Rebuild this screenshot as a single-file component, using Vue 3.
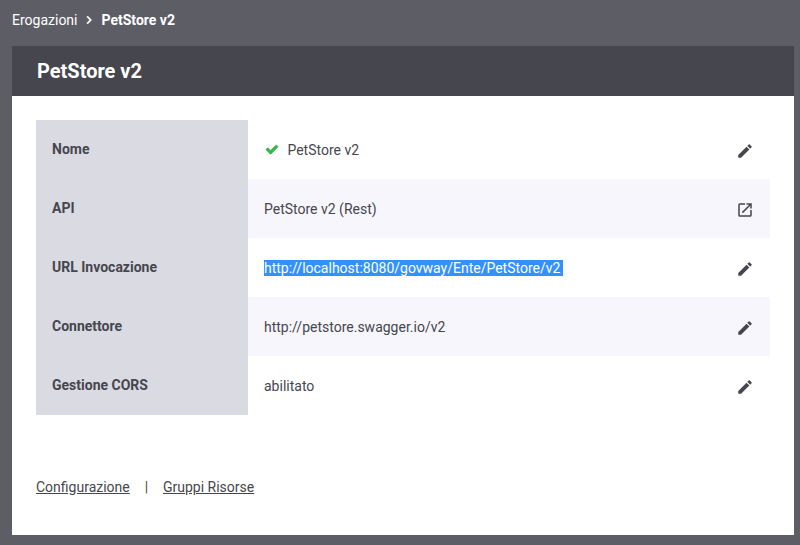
<script setup>
const rows = [
  { label: 'Nome', value: 'PetStore v2', icon: 'edit', ok: true },
  { label: 'API', value: 'PetStore v2 (Rest)', icon: 'open' },
  { label: 'URL Invocazione', value: 'http://localhost:8080/govway/Ente/PetStore/v2', icon: 'edit', selected: true },
  { label: 'Connettore', value: 'http://petstore.swagger.io/v2', icon: 'edit' },
  { label: 'Gestione CORS', value: 'abilitato', icon: 'edit' },
]
const icons = {
  edit: 'M3 17.25V21h3.75L17.81 9.94l-3.75-3.75L3 17.25zM20.71 7.04a1 1 0 0 0 0-1.41l-2.34-2.34a1 1 0 0 0-1.41 0l-1.83 1.83 3.75 3.75 1.83-1.83z',
  open: 'M19 19H5V5h7V3H5a2 2 0 0 0-2 2v14a2 2 0 0 0 2 2h14c1.1 0 2-.9 2-2v-7h-2v7zM14 3v2h3.59l-9.83 9.83 1.41 1.41L19 6.41V10h2V3h-7z',
}
</script>

<template>
  <div class="page">
    <nav class="crumbs">
      <a class="crumb">Erogazioni</a>
      <svg class="chevron" viewBox="0 0 24 24"><path d="M8.59 16.59 13.17 12 8.59 7.41 10 6l6 6-6 6z" /></svg>
      <span class="crumb current">PetStore v2</span>
    </nav>
    <main class="panel">
      <h1 class="title">PetStore v2</h1>
      <div class="body">
        <div class="table">
          <div v-for="row in rows" :key="row.label" class="row">
            <div class="label">{{ row.label }}</div>
            <div class="value">
              <svg v-if="row.ok" class="check" viewBox="121 334 1550 1188"><path d="M1671 566q0 40-28 68l-724 724-136 136q-28 28-68 28t-68-28l-136-136-362-362q-28-28-28-68t28-68l136-136q28-28 68-28t68 28l294 295 656-657q28-28 68-28t68 28l136 136q28 28 28 68z" /></svg>
              <span class="text" :class="{ selected: row.selected }">{{ row.value }}</span>
              <svg class="icon" viewBox="0 0 24 24"><path :d="icons[row.icon]" /></svg>
            </div>
          </div>
        </div>
        <div class="links">
          <a class="link">Configurazione</a>
          <span class="divider">|</span>
          <a class="link">Gruppi Risorse</a>
        </div>
      </div>
    </main>
  </div>
</template>

<style>
body {
  background: #5d5d66;
}
</style>

<style scoped>
.page {
  box-sizing: border-box;
  height: 545px;
  padding: 0 6px 10px 12px;
  display: flex;
  flex-direction: column;
  background: #5d5d66;
  color: #46464e;
  font-family: Roboto, sans-serif;
  font-size: 14px;
  line-height: 16px;
}
.crumbs {
  height: 46px;
  box-sizing: border-box;
  padding-top: 12px;
  display: flex;
  align-items: flex-start;
  color: #fff;
}
.chevron {
  width: 16px;
  height: 16px;
  margin: 0 4.6px 0 3.4px;
  fill: #fff;
  stroke: #fff;
  stroke-width: 0.7;
}
.current {
  font-weight: 700;
}
.panel {
  flex: 1;
  background: #fff;
}
.title {
  margin: 0;
  padding-left: 25px;
  height: 50px;
  line-height: 50px;
  background: #46464e;
  color: #fff;
  font-size: 20px;
  font-weight: 700;
}
.body {
  padding: 24px;
}
.row {
  display: flex;
  height: 59px;
}
.label {
  box-sizing: border-box;
  width: 212px;
  padding: 21px 16px 0;
  background: #dadae3;
  font-weight: 700;
}
.value {
  flex: 1;
  box-sizing: border-box;
  display: flex;
  align-items: center;
  padding: 0 16px;
}
.row:nth-child(even) .value {
  background: #f6f6fc;
}
.check {
  width: 12px;
  height: 9.2px;
  margin: 0 9.4px 0 2px;
  padding-top: 1px;
  overflow: visible;
  fill: #39b54a;
  stroke: #39b54a;
  stroke-width: 60;
}
.selected {
  background: #3390ff;
  color: #fff;
  padding-right: 2.6px;
}
.icon {
  width: 18px;
  height: 18px;
  margin: 3px 0 0 auto;
  fill: #46464e;
}
.links {
  display: flex;
  padding-top: 64px;
}
.link {
  text-decoration: underline;
}
.divider {
  margin: 0 14.8px 0 15px;
}
</style>
